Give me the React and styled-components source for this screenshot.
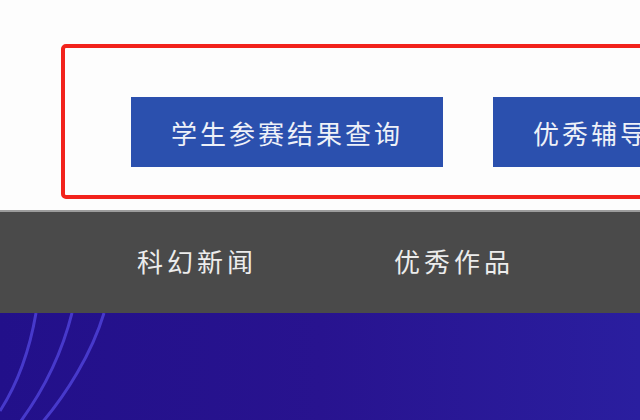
import React, { Fragment } from 'react';
import styled, { createGlobalStyle } from 'styled-components';

const GlobalStyle = createGlobalStyle`
  html, body {
    margin: 0;
    padding: 0;
    background: #fdfdfd;
    overflow: hidden;
  }
  body {
    font-family: "Noto Sans CJK SC", "Noto Sans", sans-serif;
  }
`;

// styled
const Page = styled.div`
  width: 640px;
  height: 420px;
  display: flex;
  flex-direction: column;
  overflow: hidden;
`;

const QuerySection = styled.section`
  padding: 44px 0 11px 61px;
`;

const QueryBox = styled.div`
  width: 720px;
  height: 155px;
  box-sizing: border-box;
  border: 4px solid #f2231c;
  border-radius: 5px;
  display: flex;
  align-items: flex-start;
  gap: 50px;
  padding: 49px 0 0 66px;
`;

const QueryButton = styled.a`
  flex: none;
  width: 312px;
  height: 70px;
  display: flex;
  align-items: center;
  justify-content: center;
  background: #2b50ae;
  color: #eef1f8;
  font-size: 26px;
  letter-spacing: 3px;
  text-decoration: none;
  white-space: nowrap;
  overflow: hidden;
`;

const NavBar = styled.nav`
  height: 97px;
  border-top: 2px solid #9c9c9c;
  background: #4a4a4a;
  display: flex;
  align-items: center;
  gap: 137px;
  padding: 0 0 4px 137px;
`;

const NavItem = styled.a`
  color: #ececec;
  font-size: 26px;
  letter-spacing: 4px;
  text-decoration: none;
  white-space: nowrap;
`;

const Banner = styled.div`
  flex: 1;
  background: linear-gradient(90deg, #22108a 0%, #28138f 50%, #2a1e9f 100%);
  overflow: hidden;
`;

const Curves = styled.svg`
  display: block;
  width: 200px;
  height: 112px;
`;

const queryLinks = ['学生参赛结果查询', '优秀辅导教师查询'];
const navLinks = ['科幻新闻', '优秀作品'];

const App = () => (
  <Fragment>
    <GlobalStyle />
    <Page>
      <QuerySection>
        <QueryBox>
          {queryLinks.map((label) => (
            <QueryButton key={label} href="#">
              {label}
            </QueryButton>
          ))}
        </QueryBox>
      </QuerySection>

      <NavBar>
        {navLinks.map((label) => (
          <NavItem key={label} href="#">
            {label}
          </NavItem>
        ))}
      </NavBar>

      <Banner>
        {/* light streaks sweeping down from the top left */}
        <Curves viewBox="0 0 200 112">
          <g fill="none" stroke="#5044dc" strokeWidth="3" opacity="0.8">
            <path d="M36 0 C30 35 18 70 0 98" />
            <path d="M72 0 C62 40 42 80 18 112" />
            <path d="M104 0 C92 40 66 82 40 112" />
          </g>
        </Curves>
      </Banner>
    </Page>
  </Fragment>
);

export default App;
